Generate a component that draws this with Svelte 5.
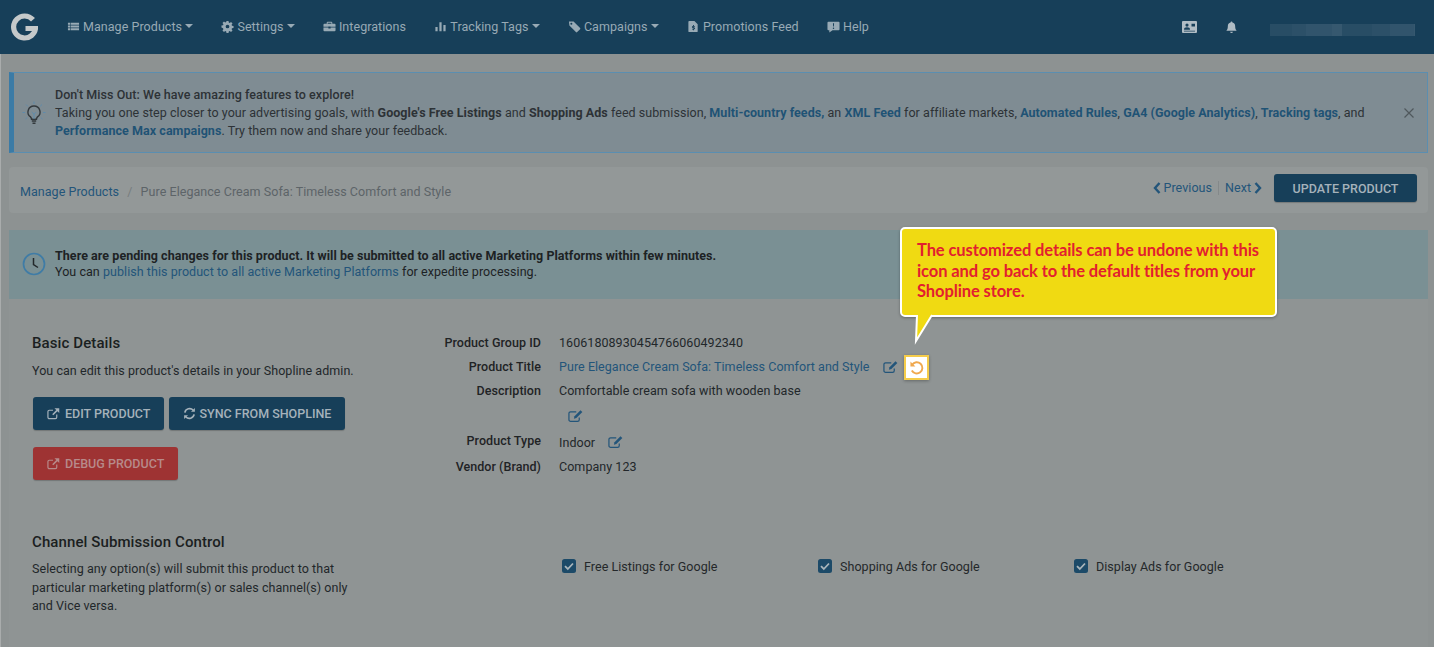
<script>
const navItems = [
  { label: 'Manage Products', icon: 'list', caret: true },
  { label: 'Settings', icon: 'cog', caret: true },
  { label: 'Integrations', icon: 'case', caret: false },
  { label: 'Tracking Tags', icon: 'bars', caret: true },
  { label: 'Campaigns', icon: 'tag', caret: true },
  { label: 'Promotions Feed', icon: 'file', caret: false },
  { label: 'Help', icon: 'help', caret: false }
]

const channels = ['Free Listings for Google', 'Shopping Ads for Google', 'Display Ads for Google']
const blur = [22, 14, 26, 10, 30, 18, 24, 12, 28, 16, 20, 26, 12, 22, 16]
</script>

{#snippet navIcon(name)}
  <svg class="nav-icon" viewBox="0 0 14 14" aria-hidden="true">
    {#if name === 'list'}
      <path d="M1 3h2.4v2H1zM4 3h9v2H4zM1 6h2.4v2H1zM4 6h9v2H4zM1 9h2.4v2H1zM4 9h9v2H4z" />
    {:else if name === 'cog'}
      <path fill-rule="evenodd" d="M5.900 1h2.200l.3 1.700 1 .4 1.400-1 1.600 1.600-1 1.400.4 1 1.700.3v2.200l-1.700.3-.4 1 1 1.400-1.600 1.600-1.400-1-1 .4-.3 1.700H5.900l-.3-1.700-1-.4-1.400 1-1.600-1.600 1-1.400-.4-1L.5 8.100V5.900l1.700-.3.4-1-1-1.400 1.600-1.600 1.400 1 1-.4zM7 5a2 2 0 1 0 0 4 2 2 0 0 0 0-4z" />
    {:else if name === 'case'}
      <path fill-rule="evenodd" d="M5 2h4a1 1 0 0 1 1 1v1h2.500a1 1 0 0 1 1 1v2.400H8.200V7H5.800v.4H.5V5a1 1 0 0 1 1-1H4V3a1 1 0 0 1 1-1zm0 2h4V3H5zM.5 8.200h5.300v1h2.400v-1h5.300V11a1 1 0 0 1-1 1h-11a1 1 0 0 1-1-1z" />
    {:else if name === 'bars'}
      <path d="M1.500 7.500h2.400V12H1.500zM5.800 2.500h2.400V12H5.800zM10.100 5.500h2.400V12h-2.400z" />
    {:else if name === 'tag'}
      <path fill-rule="evenodd" d="M1 1.500h5l7 7a1 1 0 0 1 0 1.400L9.900 13a1 1 0 0 1-1.400 0l-7-7.200zM3.600 3a1 1 0 1 0 0 2.200 1 1 0 0 0 0-2.200z" />
    {:else if name === 'file'}
      <path fill-rule="evenodd" d="M2.500 1H8l3.500 3.500V12a1 1 0 0 1-1 1h-8a1 1 0 0 1-1-1V2a1 1 0 0 1 1-1zm4 4.500v1c-1.600.1-1.700 2 0 2.200.9.1.8.6 0 .6H5.400v.9h1.100v.8h1v-.8c1.600-.2 1.700-2.100 0-2.300-.8-.1-.8-.6 0-.6h1v-.8h-1v-1z" />
    {:else}
      <path fill-rule="evenodd" d="M1.500 2h11a1 1 0 0 1 1 1v7a1 1 0 0 1-1 1H6l-3.500 2.500V11h-1a1 1 0 0 1-1-1V3a1 1 0 0 1 1-1zm4.900 1.500.2 3.500h.8l.2-3.500zM7 8a.8.8 0 1 0 0 1.600A.8.8 0 0 0 7 8z" />
    {/if}
  </svg>
{/snippet}

{#snippet editIcon()}
  <svg class="edit" viewBox="0 0 16 14" aria-hidden="true">
    <path d="M12 8.500V11a1.800 1.800 0 0 1-1.800 1.800H2.800A1.800 1.800 0 0 1 1 11V4.300a1.800 1.800 0 0 1 1.800-1.800h6" fill="none" stroke="currentColor" stroke-width="1.300" />
    <path d="M13.300.8l2 1.900-6.400 6.500-2.600.7.600-2.700z" fill="currentColor" />
  </svg>
{/snippet}

{#snippet extIcon()}
  <svg class="ext" viewBox="0 0 14 13" aria-hidden="true">
    <path d="M10.500 7.500v3A1.500 1.500 0 0 1 9 12H2.500A1.500 1.500 0 0 1 1 10.500V4.500A1.500 1.500 0 0 1 2.500 3h4" fill="none" stroke="currentColor" stroke-width="1.300" />
    <path d="M8 .8h5.200V6l-2-2-4.400 4.400-1.200-1.200L10 2.800z" fill="currentColor" />
  </svg>
{/snippet}

<div class="page">
  <header class="nav">
    <svg class="logo" viewBox="0 0 28 28" aria-hidden="true">
      <path d="M23 6.800A11 11 0 0 0 14.500 3 11 11 0 1 0 25.500 15.500H15.500" fill="none" stroke="currentColor" stroke-width="5.200" />
    </svg>
    <nav class="nav-links">
      {#each navItems as item}
        <span class="nav-item">
          {@render navIcon(item.icon)}
          {item.label}
          {#if item.caret}<i class="caret"></i>{/if}
        </span>
      {/each}
    </nav>
    <div class="nav-right">
      <svg class="id-card" viewBox="0 0 15 12" aria-hidden="true">
        <path fill-rule="evenodd" d="M1 0h13a1 1 0 0 1 1 1v10a1 1 0 0 1-1 1H1a1 1 0 0 1-1-1V1a1 1 0 0 1 1-1zm4 2.500a1.600 1.600 0 1 0 0 3.200 1.600 1.600 0 0 0 0-3.200zM2 8.800h6C8 7 7 6.300 5 6.300S2 7 2 8.800zm7.500-6v2.800h3.500V2.800zM2 9.800v.8h11v-.8z" />
      </svg>
      <svg class="bell" viewBox="0 0 12 13" aria-hidden="true">
        <path d="M6 0a1 1 0 0 1 1 1.100C9 1.500 10 3 10 5c0 3 .8 4 1.600 5H.4C1.200 9 2 8 2 5c0-2 1-3.500 3-3.900A1 1 0 0 1 6 0zM4.500 11h3a1.500 1.500 0 0 1-3 0z" />
      </svg>
      <div class="account" aria-hidden="true">
        {#each blur as w, i}
          <span style="width: {w}px; opacity: {0.35 + (i % 4) * 0.1}"></span>
        {/each}
      </div>
    </div>
  </header>

  <main class="content">
    <section class="alert">
      <svg class="bulb" viewBox="0 0 24 24" aria-hidden="true">
        <path d="M12 .5v2.500M4 3.500l1.800 1.800M20 3.500l-1.800 1.800M.5 11.500H3M21 11.500h2.500M3.500 18l1.600-1.300M20.500 18l-1.600-1.300" stroke="#5f8bab" stroke-width="1" />
        <path d="M12 5a6 6 0 0 0-3.500 10.900c.8.700.9 1.400 1 2.300h5c.1-.9.200-1.600 1-2.300A6 6 0 0 0 12 5z" fill="none" stroke="#33393d" stroke-width="1.400" />
        <path d="M9.800 20h4.400M10.500 22.300h3" stroke="#33393d" stroke-width="1.400" />
        <path d="M9.800 11l2.200 2.200 2.200-2.200M12 13v5" fill="none" stroke="#5f8bab" stroke-width="1" />
      </svg>
      <div class="alert-text">
        <div class="alert-title">Don't Miss Out: We have amazing features to explore!</div>
        <div>Taking you one step closer to your advertising goals, with <b>Google's Free Listings</b> and <b>Shopping Ads</b> feed submission, <b class="blue">Multi-country feeds,</b> an <b class="blue">XML Feed</b> for affiliate markets, <b class="blue">Automated Rules</b>, <b class="blue">GA4 (Google Analytics)</b>, <b class="blue">Tracking tags</b>, and</div>
        <div><b class="blue">Performance Max campaigns</b>. Try them now and share your feedback.</div>
      </div>
      <svg class="close" viewBox="0 0 10 10" aria-hidden="true"><path d="M.5.500l9 9M9.500.500l-9 9" stroke="currentColor" stroke-width="1.200" /></svg>
    </section>

    <section class="crumbs">
      <div class="crumb-path">
        <span class="crumb-link">Manage Products</span>
        <span class="sep">/</span>
        <span class="crumb-current">Pure Elegance Cream Sofa: Timeless Comfort and Style</span>
      </div>
      <div class="crumb-actions">
        <div class="pager">
          <span class="pager-item">
            <svg class="chev" viewBox="0 0 8 12"><path d="M6.500 1L2 6l4.500 5" fill="none" stroke="currentColor" stroke-width="2.400" /></svg>
            Previous
          </span>
          <span class="pager-sep"></span>
          <span class="pager-item">
            Next
            <svg class="chev" viewBox="0 0 8 12"><path d="M1.500 1L6 6l-4.500 5" fill="none" stroke="currentColor" stroke-width="2.400" /></svg>
          </span>
        </div>
        <button class="btn btn-update" type="button">UPDATE PRODUCT</button>
      </div>
    </section>

    <section class="card">
      <div class="pending">
        <svg class="clock" viewBox="0 0 24 24" aria-hidden="true">
          <circle cx="12" cy="12" r="10.500" fill="none" stroke="#3f7ca6" stroke-width="1.700" />
          <path d="M11.500 6v6.500l4.500 3" fill="none" stroke="#23282b" stroke-width="1.500" />
        </svg>
        <div>
          <div><b>There are pending changes for this product. It will be submitted to all active Marketing Platforms within few minutes.</b></div>
          <div>You can <span class="link">publish this product to all active Marketing Platforms</span> for expedite processing.</div>
        </div>
      </div>

      <div class="row basic">
        <div class="side">
          <h2>Basic Details</h2>
          <p>You can edit this product's details in your Shopline admin.</p>
          <div class="buttons">
            <button class="btn" type="button">{@render extIcon()}EDIT PRODUCT</button>
            <button class="btn" type="button">
              <svg class="sync" viewBox="0 0 14 14" aria-hidden="true">
                <path d="M2 6a5.200 5.200 0 0 1 9-2.500M12 8a5.200 5.200 0 0 1-9 2.500" fill="none" stroke="currentColor" stroke-width="1.800" />
                <path d="M12.800 1v4.200H8.600zM1.200 13V8.800h4.200z" fill="currentColor" />
              </svg>
              SYNC FROM SHOPLINE
            </button>
            <button class="btn btn-red" type="button">{@render extIcon()}DEBUG PRODUCT</button>
          </div>
        </div>
        <dl class="facts">
          <dt>Product Group ID</dt>
          <dd>16061808930454766060492340</dd>
          <dt>Product Title</dt>
          <dd class="title-row">
            <span class="link">Pure Elegance Cream Sofa: Timeless Comfort and Style</span>
            <span class="title-edit">{@render editIcon()}</span>
            <span class="undo">
              <svg viewBox="0 0 16 16" aria-hidden="true">
                <path d="M3.300 5A6 6 0 1 1 3 11.200" fill="none" stroke="#f0a84e" stroke-width="2" />
                <path d="M1.500 1.500V6.800h5.300z" fill="#f0a84e" />
              </svg>
            </span>
          </dd>
          <dt>Description</dt>
          <dd class="desc">
            Comfortable cream sofa with wooden base
            <span class="desc-edit">{@render editIcon()}</span>
          </dd>
          <dt>Product Type</dt>
          <dd class="type-row">Indoor {@render editIcon()}</dd>
          <dt>Vendor (Brand)</dt>
          <dd>Company 123</dd>
        </dl>
      </div>

      <div class="row channel">
        <div class="side">
          <h2>Channel Submission Control</h2>
          <p>Selecting any option(s) will submit this product to that particular marketing platform(s) or sales channel(s) only and Vice versa.</p>
        </div>
        <div class="checks">
          {#each channels as channel}
            <label class="check">
              <svg viewBox="0 0 14 14" aria-hidden="true">
                <rect width="14" height="14" rx="2.500" fill="#1c4a68" />
                <path d="M3 7.200l2.800 2.800L11 4.500" fill="none" stroke="#a9b5bb" stroke-width="1.800" />
              </svg>
              {channel}
            </label>
          {/each}
        </div>
      </div>
    </section>
  </main>

  <aside class="callout">
    The customized details can be undone with this icon and go back to the default titles from your Shopline store.
    <svg class="tail" viewBox="0 0 20 30" aria-hidden="true">
      <path d="M2 0L1 26 17 0" fill="#f0da12" stroke="#fff" stroke-width="2" />
      <path d="M3.500 0h12v-3h-12z" fill="#f0da12" />
    </svg>
  </aside>
</div>

<style>
:global(body) {
  margin: 0;
  background: #8d9292;
}

.page {
  position: relative;
  width: 1434px;
  height: 647px;
  overflow: hidden;
  font-family: Roboto, "Liberation Sans", sans-serif;
  font-size: 12.5px;
  letter-spacing: 0.05px;
  color: #24282a;
  background: #8d9292;
}

.nav {
  height: 54px;
  display: flex;
  align-items: center;
  background: #173f59;
  color: #98aab5;
}

.logo {
  width: 28px;
  height: 28px;
  margin-left: 10px;
  color: #c5c9ca;
}

.nav-links {
  display: flex;
  gap: 28.400px;
  margin-left: 29px;
  margin-top: -2px;
}

.nav-item {
  display: flex;
  align-items: center;
  gap: 3px;
}

.nav-icon {
  width: 13px;
  height: 13px;
  fill: currentColor;
}

.caret {
  border-top: 4px solid currentColor;
  border-left: 4px solid transparent;
  border-right: 4px solid transparent;
}

.nav-right {
  margin-left: auto;
  display: flex;
  align-items: center;
  margin-right: 19px;
}

.id-card {
  width: 15px;
  height: 12px;
  fill: #b0bcc4;
}

.bell {
  width: 11px;
  height: 13px;
  margin-left: 29px;
  fill: #b0bcc4;
}

.account {
  display: flex;
  width: 145px;
  height: 12px;
  margin-left: 33px;
  margin-top: 5px;
  overflow: hidden;
}

.account span {
  flex: none;
  height: 12px;
  background: #47667b;
}

.content {
  box-sizing: border-box;
  height: 593px;
  padding: 18px 6px 0 8px;
  border-left: 1px solid #a9acac;
}

.alert {
  height: 81px;
  box-sizing: border-box;
  display: flex;
  align-items: center;
  border: 1px solid #5b8eb0;
  border-left: 5px solid #3b7ba6;
  background: #7f8c93;
  padding-left: 8px;
  line-height: 18px;
  color: #2d3236;
}

.bulb {
  width: 24px;
  height: 24px;
  flex: none;
}

.alert-text {
  margin-left: 9px;
}

.alert-title {
  font-weight: 500;
}

.alert b {
  font-weight: 700;
}

.blue {
  color: #1f5375;
}

.close {
  width: 10px;
  height: 10px;
  margin-left: auto;
  margin-right: 13px;
  color: #50585c;
}

.crumbs {
  margin-top: 14px;
  height: 46px;
  display: flex;
  align-items: center;
  justify-content: space-between;
  background: #939898;
  border-radius: 4px;
  padding: 0 11px 0 11px;
}

.crumb-link {
  color: #23557a;
}

.sep {
  color: #777d7e;
  margin: 0 5px;
}

.crumb-current {
  color: #5d6468;
}

.crumb-path {
  margin-top: 2px;
}

.crumb-actions {
  display: flex;
  align-items: center;
}

.pager {
  display: flex;
  align-items: center;
  color: #23557a;
  margin-top: -5px;
}

.pager-item {
  display: flex;
  align-items: center;
  gap: 3px;
}

.pager-sep {
  width: 1px;
  height: 14px;
  background: #84898a;
  margin: 0 6px 0 6px;
}

.chev {
  width: 8px;
  height: 12px;
}

.btn {
  font: inherit;
  font-weight: 500;
  letter-spacing: 0;
  display: inline-flex;
  align-items: center;
  gap: 3px;
  height: 33px;
  padding: 0 14px;
  border: 0;
  border-radius: 3px;
  background: #173f59;
  color: #a5b2bb;
  box-shadow: 0 1px 1px rgba(0, 0, 0, 0.2);
}

.btn-update {
  height: 28px;
  margin-left: 12px;
  padding: 0 18.500px;
  margin-top: -4px;
}

.btn-red {
  background: #9e3333;
  color: #b78a8a;
}

.ext {
  width: 13px;
  height: 13px;
  margin-right: 2px;
}

.sync {
  width: 13px;
  height: 13px;
}

.card {
  margin-top: 17px;
  background: #8f9494;
  border-radius: 4px 4px 0 0;
  height: 420px;
}

.pending {
  height: 69px;
  box-sizing: border-box;
  display: flex;
  align-items: center;
  gap: 9px;
  padding: 0 13px 2px;
  background: #7a9094;
  line-height: 16px;
  color: #1d2224;
}

.pending b {
  font-weight: 700;
}

.clock {
  width: 24px;
  height: 24px;
  flex: none;
}

.link {
  color: #23557a;
}

.row {
  display: flex;
  padding-left: 23px;
}

.basic {
  height: 212px;
  box-sizing: border-box;
  padding-top: 35px;
}

.side {
  width: 340px;
  flex: none;
}

h2 {
  margin: 0;
  font-size: 15px;
  font-weight: 500;
  line-height: 18px;
  letter-spacing: 0.1px;
  color: #1b1f21;
}

.side p {
  margin: 10px 0 0;
  line-height: 18px;
  color: #22272a;
}

.buttons {
  display: flex;
  flex-wrap: wrap;
  gap: 17px 5px;
  margin: 17px 0 0 1px;
}

.facts {
  margin: 0 0 0 27px;
  display: grid;
  grid-template-columns: 142px auto;
  grid-auto-rows: min-content;
  column-gap: 18px;
  row-gap: 6px;
  line-height: 18px;
}

dt {
  text-align: right;
  font-weight: 500;
  color: #1f2325;
}

dd {
  margin: 0;
  color: #22272a;
}

.edit {
  width: 15px;
  height: 14px;
  color: #23557a;
  vertical-align: -2px;
}

.title-row {
  display: flex;
  align-items: center;
  height: 18px;
}

.title-edit {
  margin-left: 14px;
  display: flex;
}

.undo {
  position: relative;
  z-index: 2;
  box-sizing: border-box;
  margin-left: 6px;
  width: 25px;
  height: 25px;
  display: flex;
  align-items: center;
  justify-content: center;
  background: #fff;
  border: 2px solid #f5cc4a;
  box-shadow: 0 1px 3px rgba(0, 0, 0, 0.3);
}

.undo svg {
  width: 15px;
  height: 15px;
}

.desc-edit {
  display: block;
  margin: 8px 0 0 9px;
  line-height: 18px;
}

.type-row {
  padding-top: 2px;
}

.type-row .edit {
  margin-left: 10px;
}

.channel {
  padding-top: 22px;
}

.channel p {
  width: 330px;
  margin-top: 9px;
  line-height: 18.500px;
}

.checks {
  display: flex;
  margin-left: 190px;
  margin-top: 24px;
}

.check {
  width: 256px;
  height: 18px;
  display: flex;
  align-items: center;
  gap: 8px;
}

.check svg {
  width: 14px;
  height: 14px;
}

.callout {
  position: absolute;
  left: 900px;
  top: 227px;
  box-sizing: border-box;
  width: 377px;
  height: 90px;
  padding: 11px 8px 0 15px;
  border: 2px solid #fff;
  border-radius: 5px;
  background: #f0da12;
  color: #e2202f;
  font-family: Lato, "Liberation Sans", sans-serif;
  font-size: 16.500px;
  font-weight: 700;
  letter-spacing: -0.1px;
  line-height: 20.500px;
  box-shadow: 0 1px 3px rgba(0, 0, 0, 0.3);
}

.tail {
  position: absolute;
  left: 13px;
  top: 86px;
  width: 20px;
  height: 30px;
  overflow: visible;
}
</style>
